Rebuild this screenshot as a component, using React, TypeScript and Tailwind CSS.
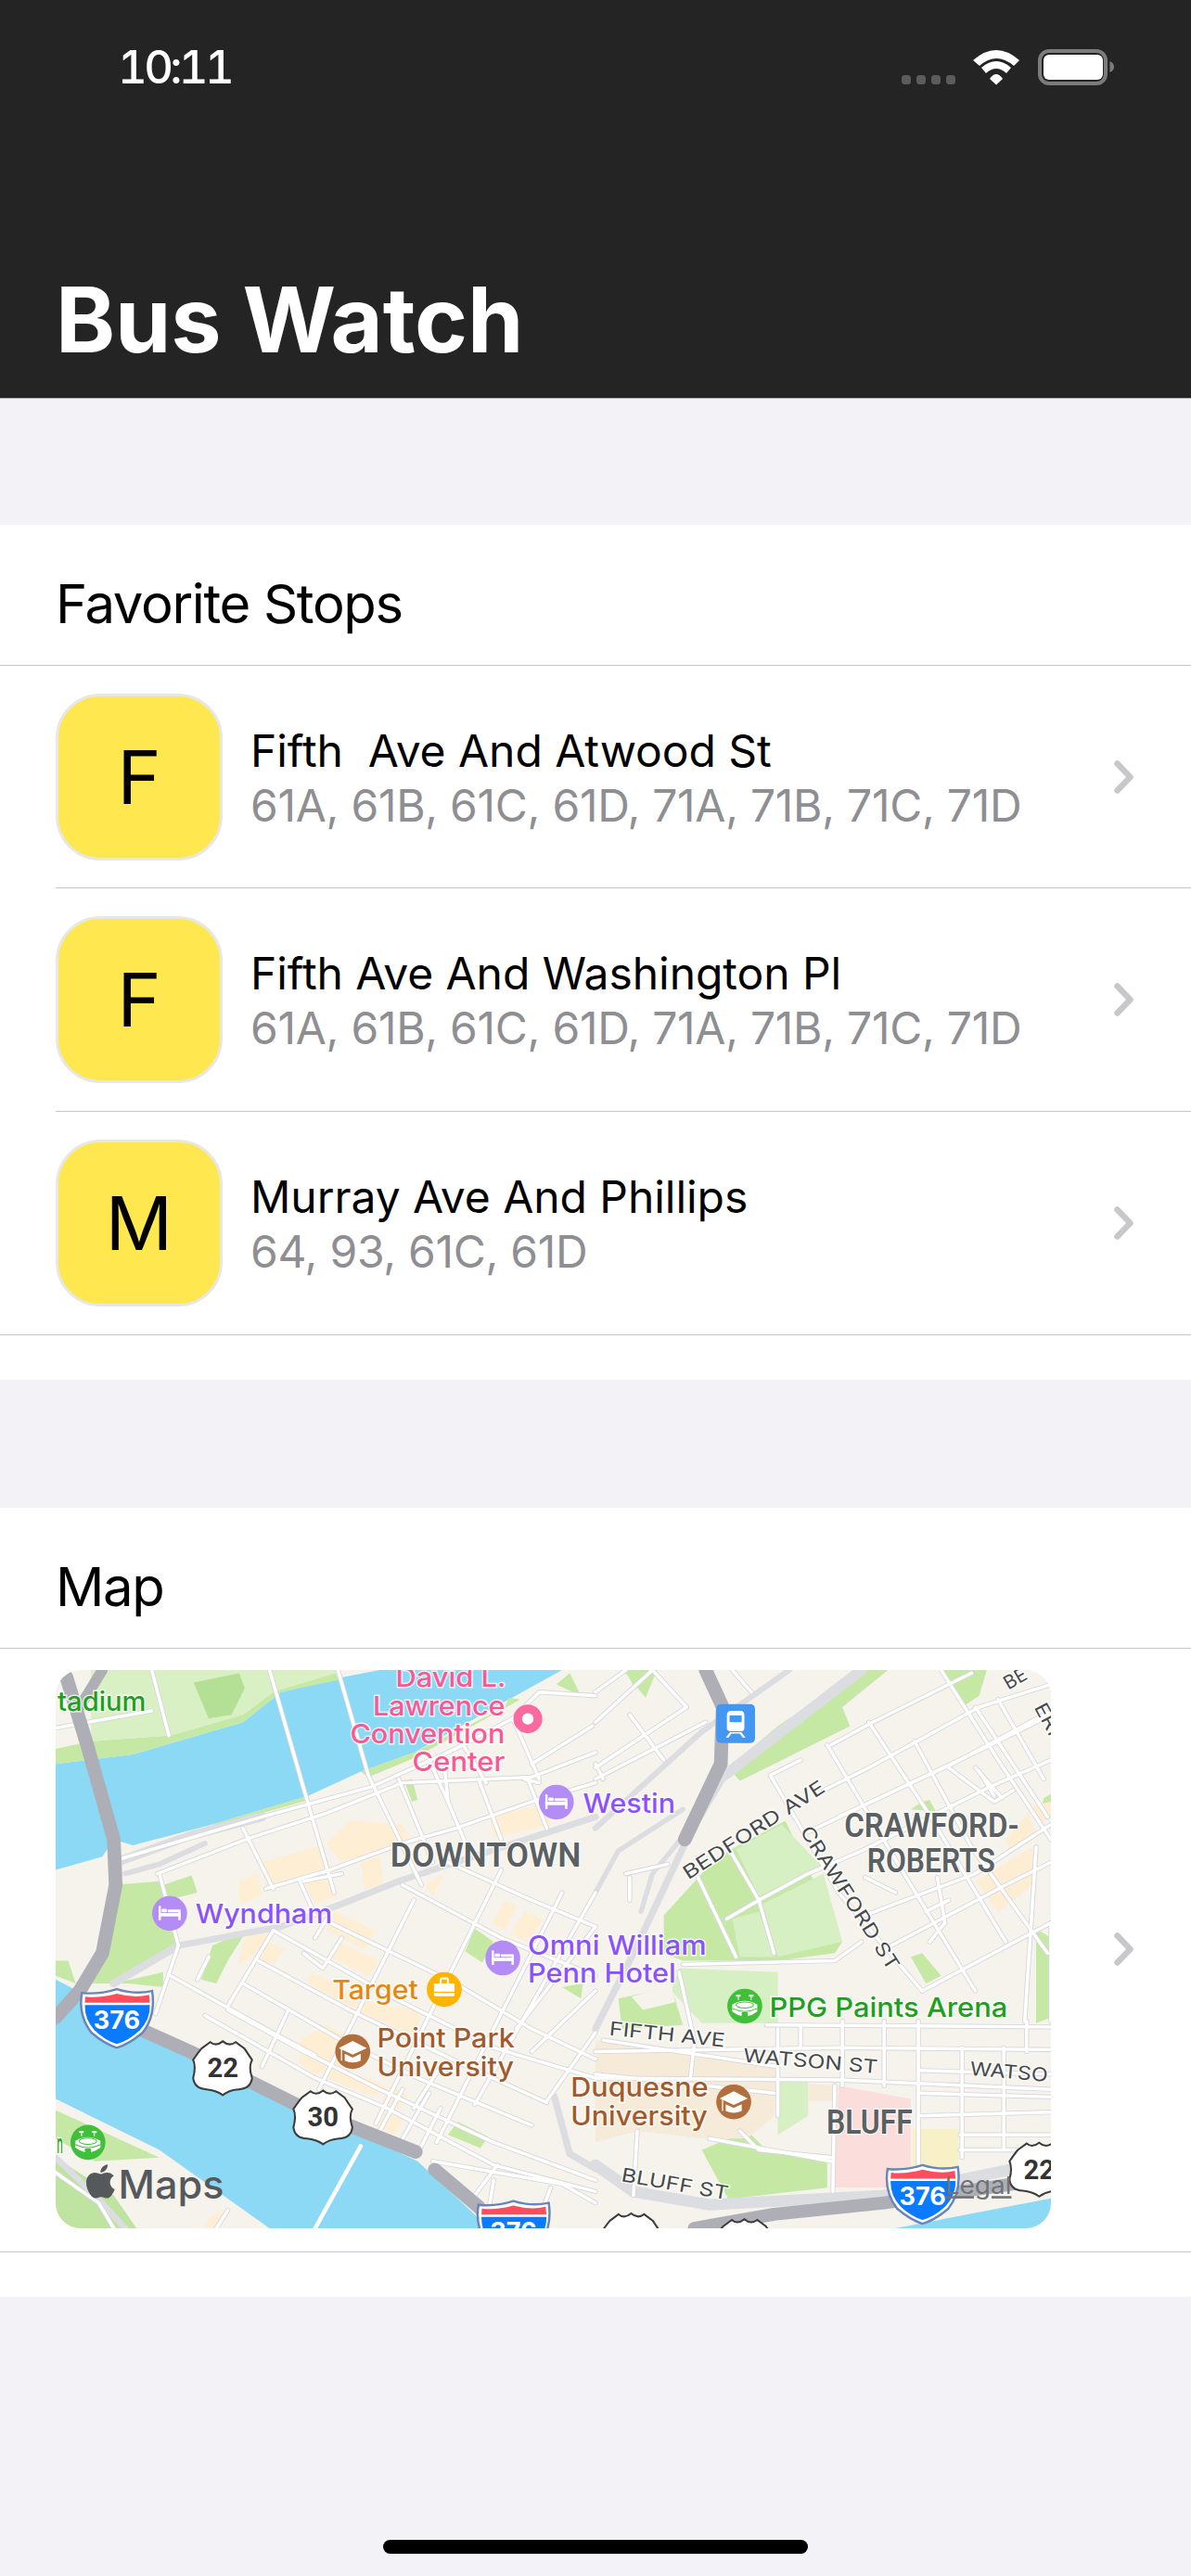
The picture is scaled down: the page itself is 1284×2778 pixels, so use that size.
import React from "react";
import { FaApple } from "react-icons/fa";

type P = number[];
const pts = (a: P) => a.reduce((s, v, i) => s + (i % 2 ? "," : " ") + v, "").trim();
const R = (a: P) => a.map((v, i) => (i % 2 ? v : v + 1568));

const roads: P[] = [
  [320,550,690,440,980,360,1200,260,1350,180,1420,110,1568,120],
  [415,590,660,495,860,430,1060,350,1400,335,1568,270],
  [710,52,810,400,880,640],
  [890,52,970,330,1110,620],
  [400,52,445,225],
  [147,205,400,160],
  [1050,340,1140,560],[1180,400,1230,520],[1260,340,1320,500],[1390,340,1440,470],
  [1130,290,1180,400],[1220,250,1280,350],[1350,180,1420,340],
  [640,470,720,630],[790,610,830,700],
  [420,590,470,780,410,960],
  [700,630,870,580,1060,510,1200,470,1400,400,1568,350],
  [720,740,1040,920,1300,1050,1568,1130],
  [680,820,920,950,1210,1090,1440,1195],
  [640,880,900,1030,1100,1130,1400,1255],
  [600,950,800,1060,1000,1160,1300,1300,1568,1400],
  [540,965,830,1130,1020,1210,1300,1360,1568,1430],
  [450,860,700,1000,830,1070],
  [870,720,1200,880,1400,1000,1568,1080],
  [1060,620,1320,760,1568,860],
  [1180,560,1400,660,1568,730],
  [600,940,720,740],[690,1100,760,950],[840,1160,1090,660],[990,1250,1320,580],[1150,1300,1480,640],[1250,1200,1568,640],
  [1360,1000,1568,730],[520,870,550,810],
  [800,610,900,590],[800,800,850,840,900,760],[830,760,860,710],
  [1160,1210,1100,1330],[1310,1360,1250,1440],
  [1170,300,1180,400],[1380,340,1420,350],
  [1560,200,1400,300],[1400,1060,1568,900],[1440,1190,1568,1010],
  [1140,1350,1480,1410,1568,1460],[1000,1270,1060,1160],[1060,1290,1130,1170],[1090,1210,1160,1100],
  [147,1380,260,1460,300,1527],[600,1480,570,1527],
  [1450,1420,1410,1527],[1300,1400,1290,1460],
  ...[
    [0,190,150,52],[0,340,290,190],[90,170,180,290],[150,52,240,150],[20,340,0,300],[0,110,80,52],[240,150,0,310],
    [360,52,410,110],[620,250,730,190,990,60],[460,330,540,290],[600,370,720,310,1010,150,1199,90],
    [640,440,940,300,1199,160],[560,480,1040,250,1199,170],
    [430,660,560,590,700,530,1040,360,1199,290],[345,710,430,660],
    [710,700,1000,590,1199,460],[760,790,1080,620,1199,560],
    [460,330,640,640,860,900],[610,250,800,570,1000,900],[720,190,870,420,1080,770],
    [840,240,990,520,1190,800],[910,52,1060,290,1199,500],[1000,150,1190,440],[1060,130,1180,340],
    [930,310,1050,400,1100,370],[1010,320,1050,385],
    [860,900,1199,720],[1160,520,1130,980],[1199,720,1199,980],
    [450,990,1199,995],[0,1060,640,1050,1199,1055],[0,1130,640,1135,1199,1160],[300,1290,620,1350],
    [480,1000,480,1230],[650,980,650,1150],[760,980,760,1150],[850,980,850,1360],[965,1050,965,1340],
    [1135,980,1135,1060],[1075,1050,1075,1320],[630,1150,625,1430],[540,990,540,1050],
    [850,1110,1199,1120],[850,1170,1199,1180],[850,1230,1199,1220],[960,1280,1199,1280],[960,1320,1199,1320],
    [230,830,630,820,700,770],[355,530,430,660,470,800],[270,600,370,810],[220,850,260,1030],
    [20,1030,480,1100],[260,1040,250,1130],[0,1120,470,1170],[110,1270,100,1440],[380,1270,430,1320,620,1340],
    [900,600,920,720,880,770],[870,690,930,660],[1000,310,1070,390],
    [90,600,90,660],[80,590,190,565],[710,600,790,640],
  ].map(R),
];

const lightRoads: [P, number][] = [
  [[470,780,740,730,900,670,1050,610,1200,560,1568,440], 17],
  [[300,880,470,780], 20],
  [[320,555,500,490,690,440], 24],
  [[330,590,420,565,540,510], 14],
  [R([0,470,280,215,510,52]), 15],
  [R([340,330,700,52]), 28],
  [R([0,1000,100,800,250,480,340,330]), 18],
  [R([0,1360,100,1430,300,1465,760,1440,1199,1350]), 30],
  [R([0,640,60,530,230,420]), 13],
  [R([120,690,150,590,240,480]), 13],
  [[1460,1180,1500,1330,1568,1370], 18],
  [[147,1340,250,1440,330,1527], 16],
];

const hiway: [P, number][] = [
  [[175,70,230,250,300,500,305,620,270,800,210,900,147,970], 36],
  [[270,52,210,150], 28],
  [[300,970,500,1060,780,1200,1095,1325], 36],
  [[1145,1372,1260,1470,1310,1527], 36],
  [R([290,52,335,150,330,300,235,500]), 36],
  [R([260,1527,470,1490,760,1460,1199,1395]), 34],
];

const Bed = ({ cx, cy }: { cx: number; cy: number }) => (
  <g transform={`translate(${cx - 29} ${cy - 20})`} fill="#fff">
    <rect x="0" y="0" width="6" height="38" />
    <rect x="52" y="10" width="6" height="28" />
    <rect x="0" y="19" width="58" height="9" />
    <rect x="8" y="8" width="14" height="9" rx="3" />
    <rect x="24" y="10" width="30" height="7" rx="2" />
  </g>
);
const Cap = ({ cx, cy }: { cx: number; cy: number }) => (
  <g transform={`translate(${cx} ${cy})`}>
    <path d="M-37 -9 L0 -28 L37 -9 L0 8 Z" fill="#fff" />
    <path d="M-21 6 L0 16 L21 6 L21 24 Q0 34 -21 24 Z" fill="#fff" />
    <rect x="-31" y="-6" width="3" height="30" fill="#fff" />
  </g>
);
const Stadium = ({ cx, cy }: { cx: number; cy: number }) => (
  <g transform={`translate(${cx} ${cy})`}>
    <path d="M-33 -4 Q0 -24 33 -4 L33 14 Q20 24 8 26 L8 16 L-8 16 L-8 26 Q-20 24 -33 14 Z" fill="#fff" />
    <ellipse cx="0" cy="-3" rx="23" ry="8" fill="none" stroke="#3fbf3a" strokeWidth="2.5" />
    <path d="M-33 6 Q0 22 33 6" fill="none" stroke="#3fbf3a" strokeWidth="2.5" />
    <rect x="-23" y="-30" width="12" height="5" fill="#fff" />
    <rect x="11" y="-30" width="12" height="5" fill="#fff" />
    <rect x="-18" y="-26" width="2.5" height="10" fill="#fff" />
    <rect x="15.5" y="-26" width="2.5" height="10" fill="#fff" />
  </g>
);
const I376 = ({ x, y }: { x: number; y: number }) => (
  <g transform={`translate(${x} ${y})`}>
    <path d="M5 10 Q50 15 97 0 Q145 15 190 5 Q200 70 165 115 Q130 145 97 155 Q65 145 30 115 Q-5 70 5 10Z" fill="#fff" stroke="#6a86b8" strokeWidth="6" />
    <path d="M14 20 Q50 25 97 12 Q145 25 182 15 L184 36 L13 36Z" fill="#ff4d5e" />
    <path d="M13 42 L184 42 Q185 80 158 108 Q130 135 97 145 Q65 135 38 108 Q12 80 13 42Z" fill="#0a7aff" />
    <text x="97" y="105" textAnchor="middle" fontSize="66" fontWeight="700" fill="#fff">376</text>
  </g>
);
const US = ({ x, y, n }: { x: number; y: number; n?: string }) => (
  <g transform={`translate(${x} ${y})`}>
    <path d="M22 22 L45 5 Q60 18 78 3 Q95 18 112 5 L135 22 Q140 30 155 52 Q145 70 155 100 Q152 128 120 130 Q95 132 78 145 Q60 132 35 130 Q3 128 0 100 Q8 70 0 52 Q15 30 22 22Z" fill="#fff" stroke="#3c3c3c" strokeWidth="5" />
    {n && <text x="37" y="98" fontSize="72" fontWeight="700" fill="#333" fontFamily="Roboto" textLength="82" lengthAdjust="spacingAndGlyphs">{n}</text>}
  </g>
);

type L = { t: string; x: number; y: number; w: number; s?: number; f?: string; rot?: number; fam?: string; wt?: number };
const label = ({ t, x, y, w, s = 70, f = "#333", rot, fam, wt = 500 }: L) => (
  <text
    key={t + x}
    x={x}
    y={y}
    fontSize={s}
    fontWeight={wt}
    fill={f}
    fontFamily={fam}
    textLength={w}
    lengthAdjust="spacingAndGlyphs"
    stroke="#ffffff"
    strokeOpacity="0.75"
    strokeWidth="7"
    paintOrder="stroke"
    transform={rot ? `rotate(${rot} ${x} ${y})` : undefined}
  >
    {t}
  </text>
);

const G = "#1f9f1f", PK = "#fb5893", PU = "#8a52ff", BR = "#a2592c", CO = "#5b6062", ST = "#474a4c";
const labels: L[] = [
  { t: "tadium", x: 152, y: 160, w: 233, f: G },
  { t: "David L.", x: 1042, y: 97, w: 290, f: PK },
  { t: "Lawrence", x: 982, y: 171, w: 348, f: PK },
  { t: "Convention", x: 922, y: 246, w: 408, f: PK },
  { t: "Center", x: 1086, y: 320, w: 244, f: PK },
  { t: "Westin", x: 1535, y: 430, w: 243, f: PU },
  { t: "DOWNTOWN", x: 1028, y: 572, w: 502, s: 92, f: CO, fam: "Roboto", wt: 600 },
  { t: "Wyndham", x: 515, y: 722, w: 360, f: PU },
  { t: "Omni William", x: 1390, y: 803, w: 470, f: PU },
  { t: "Penn Hotel", x: 1390, y: 877, w: 390, f: PU },
  { t: "Target", x: 875, y: 922, w: 226, f: "#e5870f" },
  { t: "Point Park", x: 993, y: 1050, w: 362, f: BR },
  { t: "University", x: 993, y: 1125, w: 360, f: BR },
  { t: "n", x: 150, y: 1328, w: 16, f: G },
  { t: "Duquesne", x: 1503, y: 1180, w: 362, f: BR },
  { t: "University", x: 1503, y: 1255, w: 360, f: BR },
  { t: "CRAWFORD-", x: 2223, y: 492, w: 460, s: 90, f: CO, fam: "Roboto", wt: 600 },
  { t: "ROBERTS", x: 2283, y: 585, w: 337, s: 90, f: CO, fam: "Roboto", wt: 600 },
  { t: "BLUFF", x: 2176, y: 1278, w: 227, s: 90, f: CO, fam: "Roboto", wt: 600 },
  { t: "PPG Paints Arena", x: 2026, y: 968, w: 627, f: G },
  { t: "BEDFORD AVE", x: 1812, y: 607, w: 434, s: 50, f: ST, rot: -33, wt: 400 },
  { t: "CRAWFORD ST", x: 2105, y: 478, w: 440, s: 50, f: ST, rot: 57.5, wt: 400 },
  { t: "FIFTH AVE", x: 1603, y: 1016, w: 306, s: 50, f: ST, rot: 6, wt: 400 },
  { t: "WATSON ST", x: 1956, y: 1087, w: 355, s: 50, f: ST, rot: 5, wt: 400 },
  { t: "WATSO", x: 2553, y: 1122, w: 205, s: 50, f: ST, rot: 5, wt: 400 },
  { t: "BLUFF ST", x: 1634, y: 1402, w: 285, s: 50, f: ST, rot: 10, wt: 400 },
  { t: "BE", x: 2655, y: 105, w: 62, s: 50, f: ST, rot: -30, wt: 400 },
  { t: "ERI", x: 2722, y: 150, w: 90, s: 50, f: ST, rot: 62, wt: 400 },
];

function MapArt() {
  return (
    <svg viewBox="147 52 2620 1475" preserveAspectRatio="none" className="block w-[1073px] h-[602px]">
      <rect x="147" y="52" width="2620" height="1475" fill="#f5f3eb" />
      {/* water */}
      <polygon fill="#8cd9f5" points="147,300 350,275 640,190 740,110 880,75 1000,52 1480,52 1340,130 1090,270 950,320 810,385 560,460 350,515 300,500 270,545 147,580" />
      <polygon fill="#8cd9f5" points="147,870 400,1000 800,1210 1100,1350 1260,1500 1270,1527 710,1527 420,1320 147,1185" />
      <polygon fill="#8cd9f5" points="2358,1527 2767,1448 2767,1527" />
      {/* greens */}
      <polygon fill="#c5e8a5" points="147,300 147,260 240,240 450,225 640,170 720,110 880,55 895,78 740,110 640,190 350,275" />
      <polygon fill="#d8f0c4" points="240,52 890,52 880,62 720,110 640,170 450,225 240,240" />
      <polygon fill="#b3e095" points="510,85 630,60 645,100 610,170 550,180" />
      <polygon fill="#c5e8a5" points="560,460 810,385 815,395 620,450 570,470" />
      <polygon fill="#c5e8a5" points="950,320 1090,270 1330,150 1340,125 1370,130 1090,285 970,335" />
      <polygon fill="#c5e8a5" points="1465,90 1500,60 1530,120" />
      <polygon fill="#c5e8a5" points="1065,345 1085,340 1100,395 1085,400" />
      <polygon fill="#c5e8a5" points="430,620 505,595 520,640 440,660" />
      <polygon fill="#c5e8a5" points="300,620 420,610 470,780 300,880 240,880 290,720" />
      <polygon fill="#c5e8a5" points="560,780 650,740 600,820 570,880 530,870" />
      <polygon fill="#c5e8a5" points="147,820 180,820 200,880 147,860" />
      <polygon fill="#c5e8a5" points="300,880 430,850 430,890 340,880" />
      <polygon fill="#c5e8a5" points="1250,735 1300,770 1270,825 1225,795" />
      <polygon fill="#c5e8a5" points="1480,890 1535,880 1530,920" />
      <polygon fill="#c5e8a5" points="1180,1280 1205,1245 1285,1285 1265,1315" />
      <polygon fill="#c5e8a5" points="147,1215 420,1340 250,1350 147,1290" />
      <polygon fill="#bfe3a0" points="147,1340 300,1440 360,1527 147,1527" />
      <polygon fill="#c5e8a5" points="1730,52 1640,52 1700,125" />
      <g transform="translate(1568 0)">
        <polygon fill="#c5e8a5" points="350,310 480,200 700,52 770,52 650,150 670,200 430,320 380,345" />
        <polygon fill="#c5e8a5" points="910,52 1030,52 1010,120 965,150" />
        <polygon fill="#c5e8a5" points="180,700 280,590 350,530 500,450 650,770 630,800 480,820 230,820 180,800" />
        <polygon fill="#d6efc3" points="370,525 490,460 595,570 430,650" />
        <polygon fill="#d6efc3" points="440,670 600,590 650,770 480,810" />
        <polygon fill="#d6efc3" points="360,710 430,690 475,810 380,810" />
        <polygon fill="#d6efc3" points="220,840 480,850 480,985 280,985 200,900" />
        <polygon fill="#c5e8a5" points="60,920 200,890 230,990 70,1000" />
        <polygon fill="#f5f3eb" points="95,915 200,885 210,930 125,950" />
        <polygon fill="#c5e8a5" points="280,1320 400,1270 450,1320 610,1340 610,1420 350,1450" />
        <polygon fill="#d6efc3" points="480,1140 560,1140 560,1230 480,1280" />
        <polygon fill="#c5e8a5" points="830,810 860,800 910,860 870,880" />
        <polygon fill="#c5e8a5" points="1160,735 1199,760 1199,970 1160,985" />
        <polygon fill="#c5e8a5" points="860,400 880,395 895,425 830,420" />
        <polygon fill="#c5e8a5" points="1180,390 1199,380 1199,415 1175,412" />
        <polygon fill="#c5e8a5" points="80,52 150,52 100,95" />
        <polygon fill="#fbdedb" points="640,1150 830,1185 830,1370 770,1420 625,1420" />
        <polygon fill="#f8f1c8" points="835,1265 955,1265 955,1370 835,1365" />
        <polygon fill="#f5ebd8" points="0,1030 480,1100 470,1230 400,1290 280,1290 110,1270 0,1300" />
        <polygon fill="#f5ebd8" points="560,1145 630,1150 625,1190 560,1190" />
        <polygon fill="#fcedd3" points="1000,610 1150,520 1150,620 1060,690" />
        <polygon fill="#fcedd3" points="1080,500 1140,430 1160,490 1090,530" />
        <polygon fill="#fcedd3" points="1150,410 1199,400 1199,440 1170,460" />
      </g>
      {/* orange blocks */}
      <g fill="#fdeed4">
        <polygon points="690,560 850,515 870,570 700,630" />
        <polygon points="860,510 920,450 1060,460 1080,510 900,560" />
        <polygon points="950,560 1000,545 1010,620 960,630" />
        <polygon points="630,610 680,590 690,650 630,670" />
        <polygon points="1120,620 1170,590 1140,650" />
        <polygon points="800,610 870,590 890,650 830,670" />
        <polygon points="1290,440 1440,405 1450,460 1300,495" />
        <polygon points="880,690 990,740 960,790 860,740" />
        <polygon points="650,750 710,740 680,800 625,830" />
        <polygon points="700,770 750,790 720,830 690,820" />
        <polygon points="890,770 1000,820 970,860 870,810" />
        <polygon points="820,850 1000,940 1115,950 1090,1020 960,960 810,880" />
        <polygon points="1330,660 1360,675 1330,740 1295,720" />
        <polygon points="1380,690 1430,710 1390,770 1345,750" />
        <polygon points="790,1030 860,990 950,1040 950,1080 830,1120 790,1090" />
        <polygon points="870,1100 950,1130 990,1140 960,1170 860,1130" />
        <polygon points="960,1125 1020,1155 990,1175 960,1170" />
        <polygon points="1030,1150 1075,1175 1050,1215 1005,1190" />
        <polygon points="1000,1210 1065,1240 1040,1280 985,1250" />
        <polygon points="550,1500 590,1480 570,1527 540,1527" />
      </g>
      {/* roads */}
      <g fill="none" strokeLinecap="round" strokeLinejoin="round">
        {lightRoads.map(([p, w], i) => <polyline key={i} points={pts(p)} stroke="#dcdde1" strokeWidth={w} />)}
        {roads.map((p, i) => <polyline key={i} points={pts(p)} stroke="#d8d8dc" strokeWidth="13" />)}
        {roads.map((p, i) => <polyline key={i} points={pts(p)} stroke="#ffffff" strokeWidth="8.5" />)}
        <polyline points="950,1310 830,1527" stroke="#ffffff" strokeWidth="11" />
        {hiway.map(([p, w], i) => <polyline key={i} points={pts(p)} stroke="#aeaeb6" strokeWidth={w} />)}
      </g>
      {/* poi circles */}
      <circle cx="1390" cy="181" r="38" fill="#fb6a9e" />
      <circle cx="1390" cy="181" r="15" fill="#fff" />
      {[[1465, 401], [447, 695], [1324, 813]].map(([x, y]) => (
        <g key={x}>
          <circle cx={x} cy={y} r="46" fill="#b48cf5" />
          <Bed cx={x} cy={y} />
        </g>
      ))}
      <circle cx="1170" cy="896" r="46" fill="#ffb400" />
      <g fill="#fff">
        <rect x="1143" y="880" width="54" height="34" rx="3" />
        <rect x="1143" y="902" width="54" height="3" fill="#ffb400" />
        <path d="M1158 880 V870 Q1158 864 1164 864 H1176 Q1182 864 1182 870 V880 H1177 V870 H1163 V880Z" />
      </g>
      <circle cx="929" cy="1060" r="46" fill="#b06f3d" />
      <Cap cx={929} cy={1060} />
      <circle cx="1932" cy="1193" r="46" fill="#b06f3d" />
      <Cap cx={1932} cy={1193} />
      <circle cx="232" cy="1300" r="46" fill="#3fbf3a" />
      <Stadium cx={232} cy={1300} />
      <circle cx="1961" cy="940" r="46" fill="#3fbf3a" />
      <Stadium cx={1961} cy={940} />
      {/* transit */}
      <rect x="1886" y="142" width="102" height="103" rx="12" fill="#4397f3" />
      <g fill="#fff">
        <path d="M1925 160 H1950 Q1960 160 1960 172 V206 Q1960 214 1950 214 H1925 Q1914 214 1914 206 V172 Q1914 160 1925 160Z" />
        <rect x="1921" y="172" width="32" height="18" rx="2" fill="#4397f3" />
        <path d="M1922 216 L1911 231 H1918 L1926 220 H1948 L1956 231 H1963 L1952 216Z" />
      </g>
      {/* labels */}
      <g>{labels.map(label)}</g>
      {/* shields */}
      <I376 x={211} y={895} />
      <US x={509} y={1030} n="22" />
      <US x={773} y={1160} n="30" />
      <I376 x={1255} y={1455} />
      <I376 x={2332} y={1360} />
      <US x={2658} y={1298} n="22" />
      <US x={1584} y={1485} />
      <US x={1882} y={1500} />
      {/* watermark */}
      <FaApple x={214} y={1352} size={102} color="#55595c" />
      <text x="312" y="1448" fontSize="104" fontWeight="500" fill="#55595c" textLength="278" lengthAdjust="spacingAndGlyphs">Maps</text>
      <text x="2488" y="1437" fontSize="64" fill="#6f7376" textLength="175" lengthAdjust="spacingAndGlyphs" textDecoration="underline">Legal</text>
    </svg>
  );
}

const Chevron = () => (
  <svg width="21" height="36" viewBox="0 0 21 36" className="shrink-0">
    <path d="M3.5 3.5 L17.5 18 L3.5 32.5" fill="none" stroke="#c7c7cc" strokeWidth="6.5" strokeLinecap="round" strokeLinejoin="round" />
  </svg>
);

const StatusIcons = () => (
  <svg width="230" height="40" viewBox="0 0 230 40" className="mt-[9px] shrink-0">
    {[0, 16, 32, 48].map((x) => <rect key={x} x={x} y="28" width="10" height="10" rx="3.5" fill="#5c5c5c" />)}
    <g fill="#fff">
      <path d="M77 12 Q102 -10 127 12 L121 18 Q102 2 84 18 Z" />
      <path d="M86 20 Q102 6 118 20 L113 26 Q102 16 91 26 Z" />
      <path d="M95 32 Q102 22 109 32 L102 38.5 Z" />
    </g>
    <rect x="149" y="2" width="71" height="35" rx="10" fill="none" stroke="#7c7c7c" strokeWidth="4" />
    <rect x="153" y="6" width="64" height="27" rx="6" fill="#fff" />
    <path d="M224.5 13 Q229 15 229 19 Q229 23 224.5 25 Z" fill="#7c7c7c" />
  </svg>
);

const stops = [
  { l: "F", t: "Fifth  Ave And Atwood St", s: "61A, 61B, 61C, 61D, 71A, 71B, 71C, 71D", row: "h-[240px]", line: "border-b border-[#c6c6c8]", wrap: "pl-[60px]" },
  { l: "F", t: "Fifth Ave And Washington Pl", s: "61A, 61B, 61C, 61D, 71A, 71B, 71C, 71D", row: "h-[241px]", line: "border-b border-[#c6c6c8]", wrap: "pl-[60px]" },
  { l: "M", t: "Murray Ave And Phillips", s: "64, 93, 61C, 61D", row: "h-[241px] pl-[60px]", line: "border-b border-[#c6c6c8]", wrap: "" },
];

const Header = ({ t }: { t: string }) => (
  <div className="h-[152px] pl-[60px] pt-[50px] border-b border-[#c6c6c8]">
    <div className="text-[58px] leading-[70px] tracking-[-1.35px] text-black">{t}</div>
  </div>
);

export default function App() {
  return (
    <div className="w-[1284px] h-[2778px] bg-[#f2f2f7] font-[Inter,sans-serif] flex flex-col overflow-hidden">
      <header className="h-[430px] bg-[#242424] border-b border-[#a9a9a9] shrink-0">
        <div className="flex justify-between items-start pt-[44px] pl-[127px] pr-[82px]">
          <span className="text-[49px] leading-[58px] font-medium text-white tracking-[-3.6px] tabular-nums">10:11</span>
          <StatusIcons />
        </div>
        <h1 className="mt-[185px] pl-[60px] text-[97px] leading-[116px] font-bold text-white tracking-[-0.1px]">Bus Watch</h1>
      </header>

      <section className="mt-[136px] bg-white shrink-0">
        <Header t="Favorite Stops" />
        {stops.map((s, i) => (
          <div key={i} className={s.wrap}>
            <div className={`flex items-center pr-[62px] ${s.row} ${s.line}`}>
              <div className="w-[180px] h-[180px] shrink-0 rounded-[48px] bg-[#ffe74f] border-[3px] border-[#e7e7e3] flex items-center justify-center text-[80px] text-black">
                {s.l}
              </div>
              <div className="ml-[30px] pt-[2px] flex-1 text-[48px] leading-[59px]">
                <div className="text-black whitespace-pre tracking-[-0.05px]">{s.t}</div>
                <div className="text-[#8e8e93] tracking-[-0.27px]">{s.s}</div>
              </div>
              <Chevron />
            </div>
          </div>
        ))}
        <div className="h-[48px]" />
      </section>

      <section className="mt-[138px] bg-white shrink-0">
        <Header t="Map" />
        <div className="pl-[60px] pr-[62px] pt-[23px] pb-[25px] flex items-center justify-between border-b border-[#c6c6c8]">
          <div className="w-[1073px] h-[602px] rounded-[27px] overflow-hidden">
            <MapArt />
          </div>
          <Chevron />
        </div>
        <div className="h-[48px]" />
      </section>

      <div className="flex-1 flex items-end justify-center pb-[24px]">
        <div className="w-[458px] h-[15px] rounded-full bg-black" />
      </div>
    </div>
  );
}
